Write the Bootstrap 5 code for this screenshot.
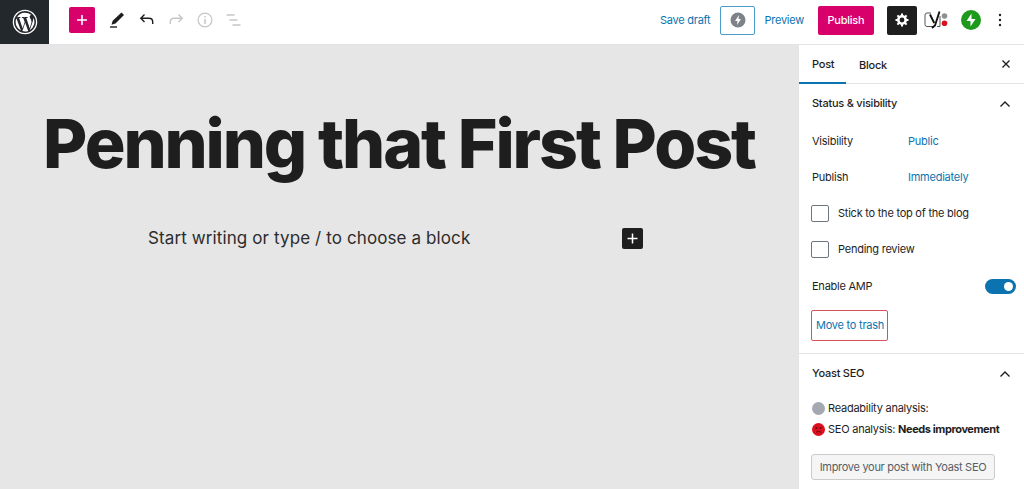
<!DOCTYPE html>
<html lang="en"><head><meta charset="utf-8"><title>Editor</title>
<link rel="stylesheet" href="https://cdn.jsdelivr.net/npm/bootstrap@5.3.0/dist/css/bootstrap.min.css">
<style>
html,body{height:489px;overflow:hidden}
body{font-family:Inter,"Liberation Sans",sans-serif;font-size:11px;letter-spacing:-.24px;color:#1e1e1e;background:#fff}
a{text-decoration:none;color:#0b74b0}
.topbar{height:45px;border-bottom:1px solid #e2e4e7;background:#fff}
.barline{height:40px}
.wp-tile{width:49px;height:44px;background:#23282d}
.add-tile{width:26px;height:26px;background:#d8006b;border-radius:2px;margin-left:20px}
.tool{display:flex}
.tools-left{margin-left:13px;gap:11px}
.pencil-ic{margin-right:1px}
.save{margin-right:10px}
.amp-tile{width:35px;height:29px;border:1px solid #4a9bc9;border-radius:2px;margin-right:9px}
.pub{width:56px;height:29px;background:#d8006b;color:#fff;border-radius:2px;margin:0 13px 0 14px;font-weight:500}
.gear{width:30px;height:29px;background:#1e1e1e;border-radius:2px;margin-right:7px}
.yoast-ic{margin-right:13px}
.jet-ic{margin-right:11px}
.dots-ic{margin-right:16px}
.canvas{flex:1 1 auto;background:#e6e6e6;min-width:0}
.post-title{font-size:68px;font-weight:800;letter-spacing:-2.1px;line-height:1;margin:0;padding-top:64px;color:#1e1e1e;text-align:center;white-space:nowrap}
.block-row{width:495px;margin:49px 0 0 148px}
.hint{font-size:17px;color:#2c2c2c;letter-spacing:.11px;line-height:24px}
.plus{width:21px;height:21px;background:#1e1e1e;border-radius:2px}
.side{width:226px;flex:0 0 226px;border-left:1px solid #e2e4e7;background:#fff}
.tabs{height:39px;border-bottom:1px solid #e2e4e7;padding-right:13px}
.tabitem{height:39px;display:flex;align-items:center;padding:3px 13px 0;font-weight:500;color:#1e1e1e}
.tab-on{width:47px;border-bottom:2px solid #0b74b0}
.panel{padding:0 8px 0 13px}
.panel-one{height:270px;border-bottom:1px solid #e2e4e7}
.phead{height:39px;font-weight:500;padding-right:5px}
.kv{height:36px}
.kv-label{width:96px}
.chk{width:18px;height:17px;border:1px solid #6c7781;border-radius:2px;margin:0 9px 0 -1px}
.amp-row{height:37px;padding-top:2px}
.toggle{width:31px;height:15px;border-radius:8px;background:#0b74b0;position:relative}
.toggle::after{content:"";position:absolute;right:3px;top:3px;width:9px;height:9px;border-radius:50%;background:#fff}
.trash{width:77px;height:31px;margin:6px 0 0 -1px;padding-left:4px;border:1px solid #d94f5c;border-radius:2px;color:#0b74b0}
.dot{width:13px;height:13px;border-radius:50%;background:#a4a8b0;margin-right:3px}
.yrow{height:21px}
.yrow-first{margin-top:5px}
.face{margin-right:3px}
.need{letter-spacing:-.42px}
.improve{width:184px;height:26px;margin:14px 0 0 -1px;border:1px solid #ccc;border-radius:3px;background:#f5f5f5;color:#555d66;letter-spacing:-.3px}
</style></head><body>
<header class="topbar d-flex align-items-start">
  <div class="wp-tile d-flex align-items-center justify-content-center">
    <svg width="26" height="26" viewBox="0 0 26 26" fill="none"><circle cx="13" cy="13" r="11.6" stroke="#fff" stroke-width="1.3"/><path fill="#fff" d="M3.6 13c0 3.700 2.200 6.900 5.300 8.500L4.400 9.200A9.400 9.400 0 0 0 3.600 13zm15.800-.5c0-1.200-.4-2-.8-2.600-.5-.8-.9-1.400-.9-2.200 0-.8.700-1.600 1.500-1.600h.1A9.400 9.400 0 0 0 5 8.200h.6c1 0 2.500-.1 2.500-.1.500 0 .6.700.1.800 0 0-.5.100-1.100.1l3.500 10.300 2.100-6.200-1.500-4.100c-.5 0-1-.1-1-.1-.5 0-.5-.8.100-.8 0 0 1.600.1 2.500.1s2.500-.1 2.500-.1c.5 0 .6.700.1.800 0 0-.5.100-1.100.1l3.400 10.300 1-3.200c.4-1.300.8-2.200.8-3zM13.200 13.800l-2.800 8.200a9.400 9.400 0 0 0 5.800-.1l-.1-.1zm8-5.300c0 .3.100.7.100 1 0 1-.2 2-.7 3.400l-2.900 8.300a9.400 9.400 0 0 0 3.500-12.700z"/></svg>
  </div>
  <div class="barline d-flex align-items-center">
    <div class="add-tile d-flex align-items-center justify-content-center">
      <svg width="12" height="12" viewBox="0 0 12 12"><path d="M6 1v10M1 6h10" stroke="#fff" stroke-width="1.6"/></svg>
    </div>
    <div class="tool tools-left align-items-center">
      <svg class="pencil-ic" width="18" height="18" viewBox="0 0 18 18"><path d="M13.500 1.500l2.500 2.500-8.500 8.500-4 1.200 1.200-4z" fill="#1e1e1e"/><path d="M2 16h7" stroke="#1e1e1e" stroke-width="1.400"/></svg>
      <svg width="18" height="18" viewBox="0 0 18 18" fill="none"><path d="M6.500 3.500L2.800 7.200l3.700 3.700M3 7.200h8c2.400 0 3.700 1.400 3.700 3.600v2.200" stroke="#1e1e1e" stroke-width="1.400"/></svg>
      <svg width="18" height="18" viewBox="0 0 18 18" fill="none"><path d="M11.500 3.500l3.700 3.700-3.700 3.700M15 7.200H7c-2.400 0-3.700 1.400-3.700 3.600v2.200" stroke="#c4c6c9" stroke-width="1.400"/></svg>
      <svg width="18" height="18" viewBox="0 0 18 18" fill="none"><circle cx="9" cy="9" r="6.900" stroke="#c4c6c9" stroke-width="1.300"/><path d="M9 8v5M9 5v1.600" stroke="#c4c6c9" stroke-width="1.500"/></svg>
      <svg width="18" height="18" viewBox="0 0 18 18" fill="none"><path d="M1.500 4h8M4.500 9h8M7.500 14h8" stroke="#c4c6c9" stroke-width="1.400"/></svg>
    </div>
  </div>
  <div class="barline ms-auto d-flex align-items-center">
    <a href="#" class="save">Save draft</a>
    <div class="amp-tile d-flex align-items-center justify-content-center">
      <svg width="16" height="16" viewBox="0 0 16 16"><circle cx="8" cy="8" r="7.500" fill="#7d8388"/><path d="M9 3L5 9h2.500L7 13l4-6H8.500z" fill="#fff"/></svg>
    </div>
    <a href="#">Preview</a>
    <a href="#" class="pub d-flex align-items-center justify-content-center">Publish</a>
    <div class="gear d-flex align-items-center justify-content-center">
      <svg width="14" height="14" viewBox="0 0 14 14"><circle cx="7" cy="7" r="3.700" fill="none" stroke="#fff" stroke-width="2.600"/><path d="M7 .5v13M.5 7h13M2.400 2.400l9.200 9.200M11.600 2.400l-9.200 9.200" stroke="#fff" stroke-width="2" stroke-dasharray="2.200 8.600 2.200"/></svg>
    </div>
    <svg class="yoast-ic" width="24" height="20" viewBox="0 0 24 20"><path d="M7 3H3a2 2 0 0 0-2 2v9.500a2 2 0 0 0 2 2h6M16 6v10.500h-3" fill="none" stroke="#555" stroke-width="1"/><path d="M15.500 1.500L11 15.500 8 18" fill="none" stroke="#111" stroke-width="1.900"/><path d="M6 4.500l4.200 8.500" fill="none" stroke="#111" stroke-width="1.900"/><circle cx="20.500" cy="6" r="2.800" fill="#8f8f8f"/><circle cx="20.500" cy="13.300" r="2.800" fill="#dc0f1e"/></svg>
    <svg class="jet-ic" width="20" height="20" viewBox="0 0 20 20"><circle cx="10" cy="10" r="10" fill="#1d9a1b"/><path d="M10.500 3.500v7.500H5.500zM9.500 16.500V9h5z" fill="#fff"/></svg>
    <svg class="dots-ic" width="16" height="18" viewBox="0 0 16 18"><g fill="#1e1e1e"><circle cx="8" cy="4" r="1.200"/><circle cx="8" cy="9" r="1.200"/><circle cx="8" cy="14" r="1.200"/></g></svg>
  </div>
</header>
<div class="d-flex" style="height:444px">
  <main class="canvas">
    <h1 class="post-title">Penning that First Post</h1>
    <div class="block-row d-flex align-items-center justify-content-between">
      <span class="hint">Start writing or type / to choose a block</span>
      <span class="plus d-flex align-items-center justify-content-center"><svg width="11" height="11" viewBox="0 0 11 11"><path d="M5.500 .5v10M.5 5.500h10" stroke="#fff" stroke-width="1.500"/></svg></span>
    </div>
  </main>
  <aside class="side">
    <div class="tabs d-flex align-items-center">
      <div class="tabitem tab-on">Post</div>
      <div class="tabitem">Block</div>
      <svg class="ms-auto" width="10" height="10" viewBox="0 0 10 10"><path d="M1.500 1.500l7 7M8.500 1.500l-7 7" stroke="#1e1e1e" stroke-width="1.300"/></svg>
    </div>
    <section class="panel panel-one">
      <div class="phead d-flex align-items-center justify-content-between"><span>Status &amp; visibility</span><svg width="12" height="8" viewBox="0 0 12 8" fill="none"><path d="M1.500 6.500L6 2l4.500 4.500" stroke="#1e1e1e" stroke-width="1.400"/></svg></div>
      <div class="kv d-flex align-items-center"><span class="kv-label">Visibility</span><a href="#">Public</a></div>
      <div class="kv d-flex align-items-center"><span class="kv-label">Publish</span><a href="#">Immediately</a></div>
      <div class="kv d-flex align-items-center"><span class="chk"></span>Stick to the top of the blog</div>
      <div class="kv d-flex align-items-center"><span class="chk"></span>Pending review</div>
      <div class="amp-row d-flex align-items-center justify-content-between"><span>Enable AMP</span><span class="toggle"></span></div>
      <a href="#" class="trash d-flex align-items-center">Move to trash</a>
    </section>
    <section class="panel">
      <div class="phead d-flex align-items-center justify-content-between"><span>Yoast SEO</span><svg width="12" height="8" viewBox="0 0 12 8" fill="none"><path d="M1.500 6.500L6 2l4.500 4.500" stroke="#1e1e1e" stroke-width="1.400"/></svg></div>
      <div class="yrow yrow-first d-flex align-items-center"><span class="dot"></span>Readability analysis:</div>
      <div class="yrow d-flex align-items-center"><svg class="face" width="13" height="13" viewBox="0 0 13 13"><circle cx="6.500" cy="6.500" r="6.500" fill="#dc0f1e"/><circle cx="4.400" cy="5" r="1" fill="#6b0a10"/><circle cx="8.600" cy="5" r="1" fill="#6b0a10"/><path d="M4 9.500c1.200-1.500 3.800-1.500 5 0" fill="none" stroke="#6b0a10" stroke-width="1"/></svg><span>SEO analysis: <b class="fw-bold need">Needs improvement</b></span></div>
      <div class="improve d-flex align-items-center justify-content-center">Improve your post with Yoast SEO</div>
    </section>
  </aside>
</div>
</body></html>
